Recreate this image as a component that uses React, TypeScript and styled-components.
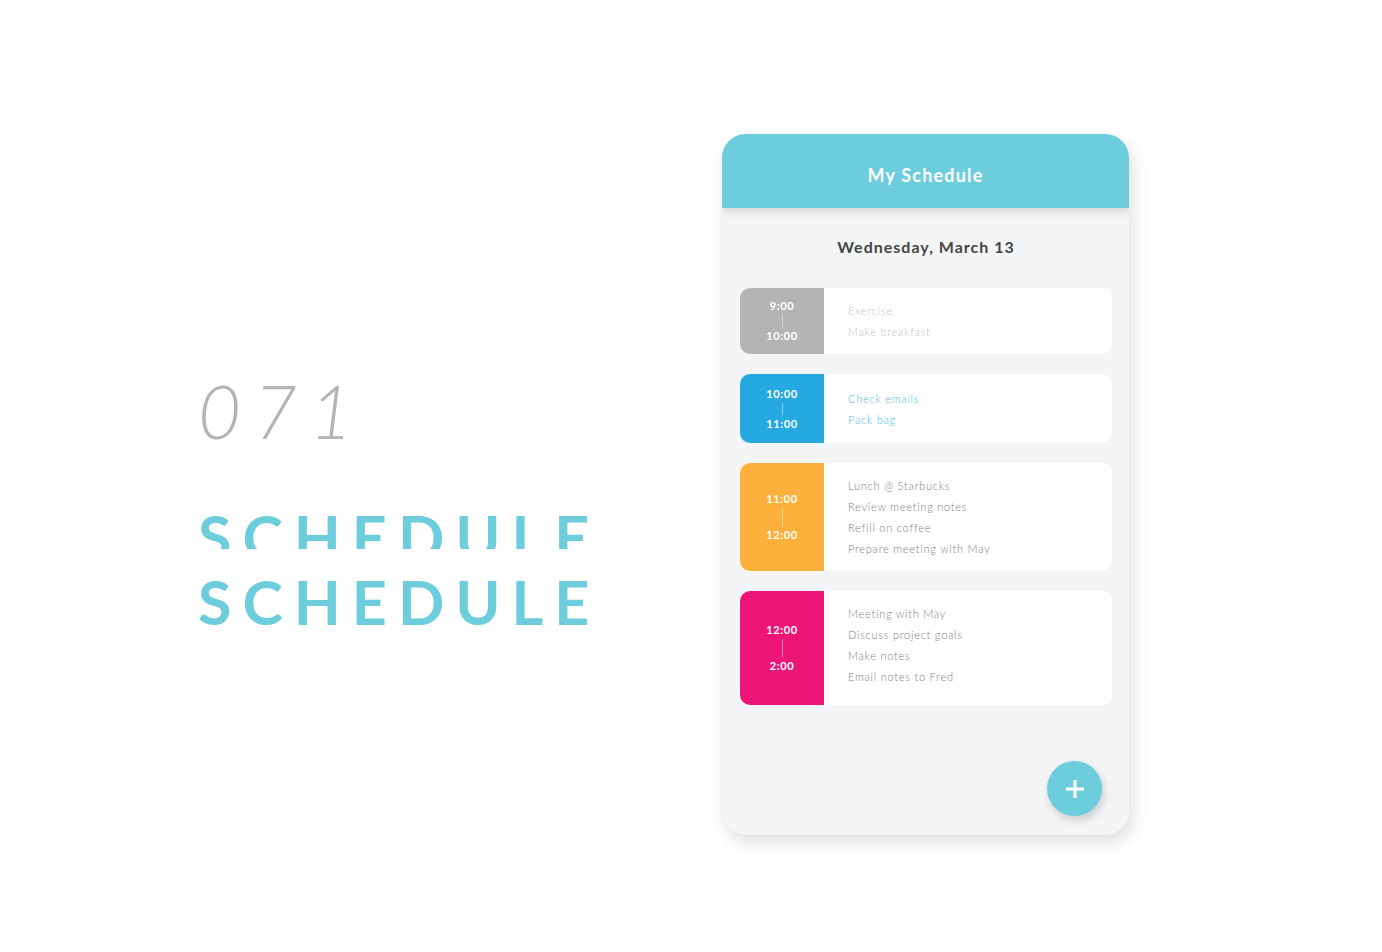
import React from "react";
import styled, { createGlobalStyle } from "styled-components";

const Global = createGlobalStyle`
  html, body { margin: 0; padding: 0; background: #ffffff; }
  body { font-family: Lato, "Open Sans", sans-serif; -webkit-font-smoothing: antialiased; }
`;

const Page = styled.div`
  width: 1382px;
  height: 952px;
  display: flex;
  align-items: flex-start;
  padding: 134px 0 0 198px;
  box-sizing: border-box;
  overflow: hidden;
`;

const Intro = styled.div`
  width: 524px;
  display: flex;
  flex-direction: column;
  padding-top: 240px;
`;

const Number = styled.div`
  font-family: Lato, sans-serif;
  font-weight: 300;
  font-style: italic;
  font-size: 74px;
  line-height: 74px;
  letter-spacing: 13px;
  color: #b4b4b4;
  height: 74px;
`;

const Clip = styled.div`
  margin-top: 58px;
  height: 43px;
  overflow: hidden;
`;

const Word = styled.div`
  font-family: Lato, sans-serif;
  font-weight: 700;
  font-size: 61px;
  line-height: 61px;
  letter-spacing: 11px;
  color: #6ecddd;
  white-space: nowrap;
`;

const SecondWord = styled(Word)`
  margin-top: 22px;
`;

const Phone = styled.div`
  position: relative;
  width: 407px;
  height: 701px;
  border-radius: 24px;
  background: #f4f5f7;
  overflow: hidden;
  box-shadow: 4px 8px 18px rgba(0, 0, 0, 0.12), 0 0 4px rgba(0, 0, 0, 0.04);
  display: flex;
  flex-direction: column;
`;

const Header = styled.div`
  height: 74px;
  flex-shrink: 0;
  background: #6ecddd;
  display: flex;
  align-items: center;
  justify-content: center;
  box-shadow: 0 4px 8px rgba(0, 0, 0, 0.12);
  position: relative;
  z-index: 1;
`;

const Title = styled.h1`
  margin: 8px 0 0 0;
  font-size: 18px;
  font-weight: 700;
  letter-spacing: 1.2px;
  color: #ffffff;
`;

const Body = styled.div`
  display: flex;
  flex-direction: column;
  padding: 28px 17px 0 18px;
`;

const DateLine = styled.div`
  text-align: center;
  font-size: 16px;
  line-height: 22px;
  font-weight: 700;
  letter-spacing: 1px;
  color: #454545;
  margin-bottom: 30px;
`;

const List = styled.div`
  display: flex;
  flex-direction: column;
  gap: 20px;
`;

const Card = styled.div`
  display: flex;
  background: #ffffff;
  border-radius: 10px;
  overflow: hidden;
`;

const TimeBlock = styled.div<{ $bg: string }>`
  width: 84px;
  flex-shrink: 0;
  background: ${(p) => p.$bg};
  display: flex;
  flex-direction: column;
  align-items: center;
  justify-content: center;
  color: #ffffff;
  font-size: 11px;
  font-weight: 700;
  letter-spacing: 0.6px;
  line-height: 14px;
`;

const Sep = styled.div<{ $h: number }>`
  width: 1px;
  height: ${(p) => p.$h}px;
  margin: 2px 0;
  background: rgba(255, 255, 255, 0.45);
`;

const Tasks = styled.ul<{ $pt: number; $pb: number; $color: string }>`
  list-style: none;
  margin: 0;
  padding: ${(p) => p.$pt}px 0 ${(p) => p.$pb}px 24px;
  color: ${(p) => p.$color};
`;

const Task = styled.li`
  font-size: 11px;
  line-height: 21px;
  font-weight: 300;
  letter-spacing: 0.75px;
`;

const Fab = styled.button`
  position: absolute;
  right: 27px;
  bottom: 19px;
  width: 55px;
  height: 55px;
  border-radius: 50%;
  border: none;
  padding: 0;
  background: #6ecddd;
  box-shadow: 2px 4px 8px rgba(0, 0, 0, 0.18);
  display: flex;
  align-items: center;
  justify-content: center;
`;

type Slot = {
  from: string;
  to: string;
  bg: string;
  color: string;
  sep: number;
  pt: number;
  pb: number;
  tasks: string[];
};

const slots: Slot[] = [
  { from: "9:00", to: "10:00", bg: "#b4b4b4", color: "#c4c4c4", sep: 12, pt: 11.5, pb: 12.5, tasks: ["Exercise", "Make breakfast"] },
  { from: "10:00", to: "11:00", bg: "#25a9e0", color: "#4fbbe8", sep: 12, pt: 13.5, pb: 13.5, tasks: ["Check emails", "Pack bag"] },
  { from: "11:00", to: "12:00", bg: "#fdb03b", color: "#7e7e7e", sep: 18, pt: 11.5, pb: 12.5, tasks: ["Lunch @ Starbucks", "Review meeting notes", "Refill on coffee", "Prepare meeting with May"] },
  { from: "12:00", to: "2:00", bg: "#ed1678", color: "#7e7e7e", sep: 18, pt: 11.5, pb: 18.5, tasks: ["Meeting with May", "Discuss project goals", "Make notes", "Email notes to Fred"] },
];

export default function App() {
  return (
    <>
      <Global />
      <Page>
        <Intro>
          <Number>071</Number>
          <Clip>
            <Word>SCHEDULE</Word>
          </Clip>
          <SecondWord>SCHEDULE</SecondWord>
        </Intro>
        <Phone>
          <Header>
            <Title>My Schedule</Title>
          </Header>
          <Body>
            <DateLine>Wednesday, March 13</DateLine>
            <List>
              {slots.map((s) => (
                <Card key={s.from}>
                  <TimeBlock $bg={s.bg}>
                    <span>{s.from}</span>
                    <Sep $h={s.sep} />
                    <span>{s.to}</span>
                  </TimeBlock>
                  <Tasks $pt={s.pt} $pb={s.pb} $color={s.color}>
                    {s.tasks.map((t) => (
                      <Task key={t}>{t}</Task>
                    ))}
                  </Tasks>
                </Card>
              ))}
            </List>
          </Body>
          <Fab aria-label="Add">
            <svg width="20" height="20" viewBox="0 0 20 20">
              <path d="M10 1v18M1 10h18" stroke="#fff" strokeWidth="3.2" />
            </svg>
          </Fab>
        </Phone>
      </Page>
    </>
  );
}
